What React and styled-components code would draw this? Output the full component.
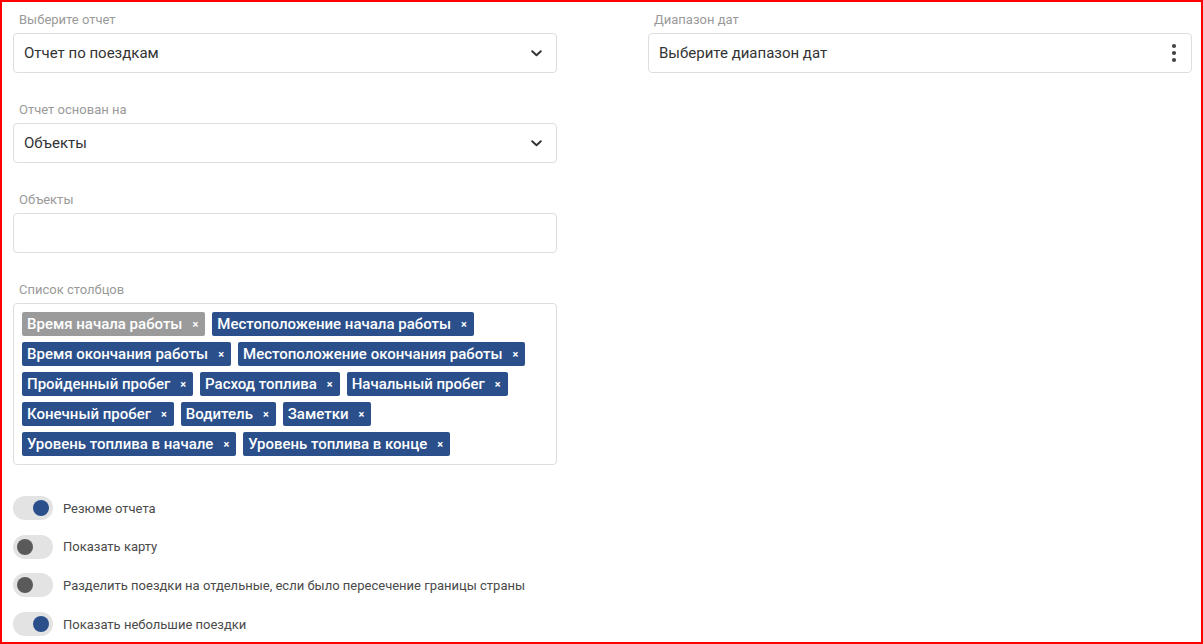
import styled, { createGlobalStyle } from 'styled-components';

const GlobalStyle = createGlobalStyle`
  html, body {
    margin: 0;
    padding: 0;
    background: #fff;
  }
  body {
    font-family: Roboto, 'Noto Sans', sans-serif;
    color: #333;
  }
`;

// Рамка всей страницы
const Frame = styled.div`
  box-sizing: border-box;
  width: 1203px;
  height: 644px;
  border: 2px solid #ff0000;
  padding: 10px 9px 0 11px;
  display: grid;
  grid-template-columns: 544px 544px;
  column-gap: 91px;
  align-items: start;
  overflow: hidden;
`;

const Column = styled.div`
  display: flex;
  flex-direction: column;
  gap: 29px;
`;

const Field = styled.div`
  display: flex;
  flex-direction: column;
`;

const Label = styled.div`
  font-size: 13px;
  line-height: 16px;
  color: #9a9a9a;
  padding-left: 6px;
  margin-bottom: 5px;
`;

const Box = styled.div`
  box-sizing: border-box;
  min-height: 40px;
  border: 1px solid #dedede;
  border-radius: 4px;
  background: #fff;
  display: flex;
  align-items: center;
  justify-content: space-between;
  padding: 0 14px 0 10px;
  font-size: 15px;
  color: #333;
`;

const TagBox = styled.div`
  box-sizing: border-box;
  border: 1px solid #dedede;
  border-radius: 4px;
  padding: 8px 8px;
  display: flex;
  flex-wrap: wrap;
  gap: 6px 7px;
  align-content: flex-start;
`;

const Tag = styled.span`
  display: inline-flex;
  align-items: center;
  height: 24px;
  padding: 0 7px 0 5px;
  border-radius: 2px;
  background: ${(props) => (props.$muted ? '#9b9b9b' : '#2a4f8b')};
  color: #fff;
  font-size: 15px;
  font-weight: 500;
  white-space: nowrap;
`;

const TagClose = styled.span`
  font-size: 11px;
  font-weight: 700;
  margin-left: 10px;
  line-height: 1;
`;

const Toggles = styled.div`
  display: flex;
  flex-direction: column;
  gap: 14.7px;
  margin-top: 2px;
`;

const ToggleRow = styled.div`
  display: flex;
  align-items: center;
  gap: 10px;
  font-size: 13px;
  color: #4a4a4a;
`;

const Track = styled.span`
  position: relative;
  display: inline-block;
  width: 40px;
  height: 24px;
  border-radius: 12px;
  background: #e3e3e3;
  flex-shrink: 0;
`;

const Knob = styled.span`
  position: absolute;
  top: 4px;
  left: ${(props) => (props.$on ? '20px' : '4px')};
  width: 16px;
  height: 16px;
  border-radius: 50%;
  background: ${(props) => (props.$on ? '#2a4f8b' : '#5a5a5a')};
`;

const Chevron = () => (
  <svg width="11" height="7" viewBox="0 0 11 7" fill="none">
    <polyline points="1.2,1.2 5.5,5.3 9.8,1.2" stroke="#333" strokeWidth="1.9" strokeLinecap="round" strokeLinejoin="round" />
  </svg>
);

const Kebab = () => (
  <svg width="6" height="20" viewBox="0 0 6 20">
    <circle cx="3" cy="3" r="2.1" fill="#444" />
    <circle cx="3" cy="10" r="2.1" fill="#444" />
    <circle cx="3" cy="17" r="2.1" fill="#444" />
  </svg>
);

const columns = [
  { name: 'Время начала работы', muted: true },
  { name: 'Местоположение начала работы' },
  { name: 'Время окончания работы' },
  { name: 'Местоположение окончания работы' },
  { name: 'Пройденный пробег' },
  { name: 'Расход топлива' },
  { name: 'Начальный пробег' },
  { name: 'Конечный пробег' },
  { name: 'Водитель' },
  { name: 'Заметки' },
  { name: 'Уровень топлива в начале' },
  { name: 'Уровень топлива в конце' },
];

const options = [
  { label: 'Резюме отчета', on: true },
  { label: 'Показать карту', on: false },
  { label: 'Разделить поездки на отдельные, если было пересечение границы страны', on: false },
  { label: 'Показать небольшие поездки', on: true },
];

const App = () => {
  return (
    <>
      <GlobalStyle />
      <Frame>
        <Column>
          <Field>
            <Label>Выберите отчет</Label>
            <Box>
              <span>Отчет по поездкам</span>
              <Chevron />
            </Box>
          </Field>
          <Field>
            <Label>Отчет основан на</Label>
            <Box>
              <span>Объекты</span>
              <Chevron />
            </Box>
          </Field>
          <Field>
            <Label>Объекты</Label>
            <Box />
          </Field>
          <Field>
            <Label>Список столбцов</Label>
            <TagBox>
              {columns.map((col) => (
                <Tag key={col.name} $muted={col.muted}>
                  {col.name}
                  <TagClose>×</TagClose>
                </Tag>
              ))}
            </TagBox>
          </Field>
          <Toggles>
            {options.map((opt) => (
              <ToggleRow key={opt.label}>
                <Track>
                  <Knob $on={opt.on} />
                </Track>
                {opt.label}
              </ToggleRow>
            ))}
          </Toggles>
        </Column>
        <Column>
          <Field>
            <Label>Диапазон дат</Label>
            <Box>
              <span>Выберите диапазон дат</span>
              <Kebab />
            </Box>
          </Field>
        </Column>
      </Frame>
    </>
  );
};

export default App;
